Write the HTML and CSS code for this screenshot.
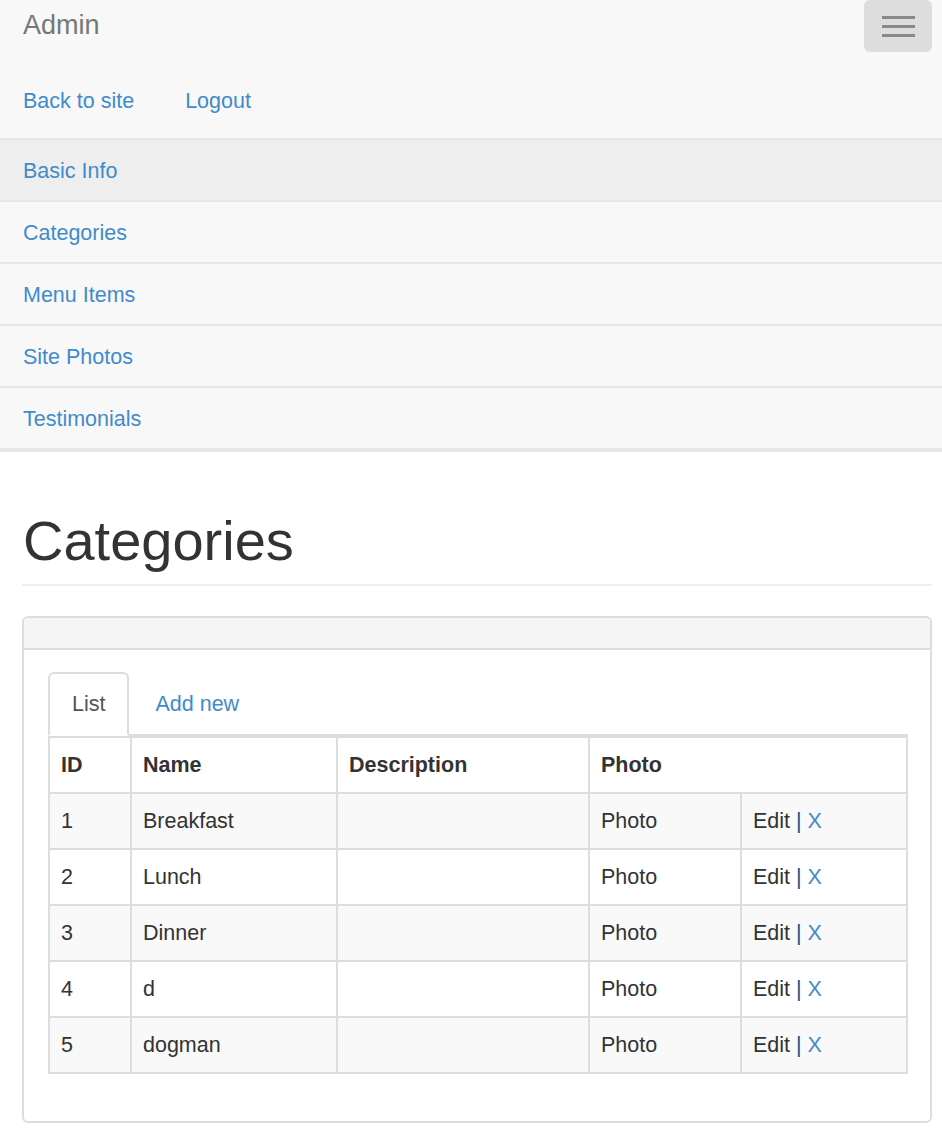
FILE: index.html
```html
<!DOCTYPE html>
<html>
<head>
<meta charset="utf-8">
<title>Admin</title>
<link rel="stylesheet" href="styles.css">
</head>
<body>
<nav class="navbar">
  <div class="navbar-header">
    <a class="brand" href="#">Admin</a>
    <button class="toggle" type="button"><span class="bar"></span><span class="bar"></span><span class="bar"></span></button>
  </div>
  <ul class="top-links">
    <li><a href="#">Back to site</a></li>
    <li><a href="#">Logout</a></li>
  </ul>
  <ul class="side-nav">
    <li class="active"><a href="#">Basic Info</a></li>
    <li><a href="#">Categories</a></li>
    <li><a href="#">Menu Items</a></li>
    <li><a href="#">Site Photos</a></li>
    <li><a href="#">Testimonials</a></li>
  </ul>
</nav>
<main class="container">
  <div class="page-header"><h1>Categories</h1></div>
  <section class="panel">
    <div class="panel-heading"></div>
    <div class="panel-body">
      <ul class="tabs">
        <li class="tab active"><a href="#">List</a></li>
        <li class="tab"><a href="#">Add new</a></li>
      </ul>
      <table class="grid">
        <colgroup>
          <col class="c-id"><col class="c-name"><col class="c-desc"><col class="c-photo"><col class="c-act">
        </colgroup>
        <thead>
          <tr><th>ID</th><th>Name</th><th>Description</th><th colspan="2">Photo</th></tr>
        </thead>
        <tbody>
          <tr><td>1</td><td>Breakfast</td><td></td><td>Photo</td><td>Edit <span class="pipe">|</span> <a href="#">X</a></td></tr>
          <tr><td>2</td><td>Lunch</td><td></td><td>Photo</td><td>Edit <span class="pipe">|</span> <a href="#">X</a></td></tr>
          <tr><td>3</td><td>Dinner</td><td></td><td>Photo</td><td>Edit <span class="pipe">|</span> <a href="#">X</a></td></tr>
          <tr><td>4</td><td>d</td><td></td><td>Photo</td><td>Edit <span class="pipe">|</span> <a href="#">X</a></td></tr>
          <tr><td>5</td><td>dogman</td><td></td><td>Photo</td><td>Edit <span class="pipe">|</span> <a href="#">X</a></td></tr>
        </tbody>
      </table>
    </div>
  </section>
</main>
</body>
</html>
```
FILE: styles.css
```css
* { box-sizing: border-box; }
body {
  margin: 0;
  font-family: "Liberation Sans", Arial, sans-serif;
  font-size: 21.5px;
  line-height: 30px;
  color: #333;
  background: #fff;
}
a { color: #428bca; text-decoration: none; }
ul { list-style: none; margin: 0; padding: 0; }

.navbar {
  background: #f8f8f8;
  border-bottom: 2px solid #e7e7e7;
}
.navbar-header {
  height: 62px;
  display: flex;
  justify-content: space-between;
  align-items: flex-start;
  padding: 0 10px 0 23px;
}
.brand {
  color: #777;
  font-size: 27px;
  line-height: 50px;
}
.toggle {
  width: 68px;
  height: 52px;
  border: 0;
  border-radius: 6px;
  background: #ddd;
  display: flex;
  flex-direction: column;
  align-items: center;
  justify-content: center;
  gap: 6px;
  padding: 0;
}
.toggle .bar {
  display: block;
  width: 33px;
  height: 3px;
  background: #888;
}
.top-links {
  height: 76px;
  display: flex;
  align-items: center;
  gap: 51px;
  padding: 2px 0 0 23px;
}
.side-nav li { border-top: 2px solid #e7e7e7; }
.side-nav li:last-child { border-bottom: 2px solid #e7e7e7; }
.side-nav a {
  display: block;
  padding: 16px 23px 14px;
  line-height: 30px;
}
.side-nav li.active { background: #eee; }

.container { padding: 0 10px 0 22px; }
.page-header {
  margin: 58px 0 30px;
  padding-bottom: 12px;
  border-bottom: 2px solid #eee;
}
.page-header h1 {
  margin: 0;
  font-size: 56px;
  line-height: 1.1;
  font-weight: 400;
  padding-left: 1px;
}

.panel {
  border: 2px solid #ddd;
  border-radius: 6px;
  margin-bottom: 20px;
}
.panel-heading {
  height: 32px;
  background: #f5f5f5;
  border-bottom: 2px solid #ddd;
  border-radius: 4px 4px 0 0;
}
.panel-body { padding: 22px 22px 22px 24px; }

.tabs {
  display: flex;
  border-bottom: 2px solid #ddd;
}
.tab { margin-bottom: -2px; margin-right: 2px; }
.tab a {
  display: block;
  padding: 15px 22px;
  line-height: 30px;
  border: 2px solid transparent;
  border-radius: 6px 6px 0 0;
}
.tab.active a {
  color: #555;
  background: #fff;
  border-color: #ddd #ddd transparent;
}

.grid {
  width: 100%;
  table-layout: fixed;
  border-collapse: collapse;
  border: 2px solid #ddd;
  margin-bottom: 25px;
}
.c-id { width: 82px; }
.c-name { width: 206px; }
.c-desc { width: 252px; }
.c-photo { width: 152px; }
.grid th, .grid td {
  border: 2px solid #ddd;
  padding: 12px 11px;
  line-height: 30px;
  text-align: left;
  vertical-align: top;
}
.grid th { font-weight: 700; }
.grid tbody tr:nth-child(odd) { background: #f9f9f9; }
.pipe { color: #23527c; }
```
